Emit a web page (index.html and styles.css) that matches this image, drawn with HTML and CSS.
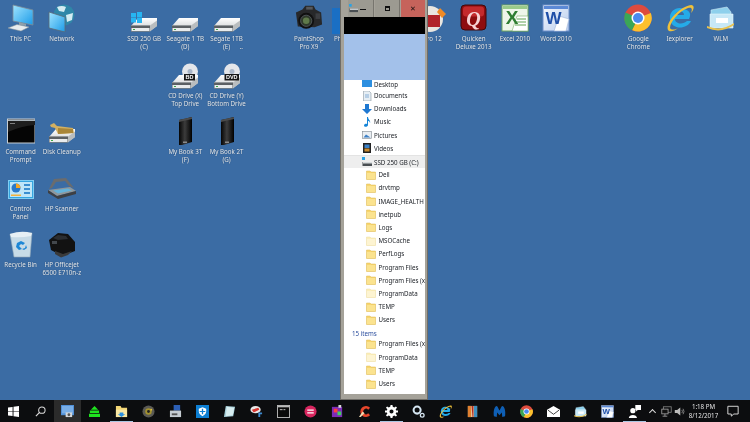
FILE: index.html
```html
<!DOCTYPE html>
<html lang="en">
<head>
<meta charset="utf-8">
<title>Desktop</title>
<link rel="stylesheet" href="styles.css">
</head>
<body>
<svg class="defs" aria-hidden="true">
  <defs>
    <linearGradient id="sky" x1="0" y1="0" x2="1" y2="1"><stop offset="0" stop-color="#9fe4ff"/><stop offset="1" stop-color="#1c9be8"/></linearGradient>
    <linearGradient id="slab" x1="0" y1="0" x2="0" y2="1"><stop offset="0" stop-color="#ffffff"/><stop offset="1" stop-color="#c9ccce"/></linearGradient>
    <linearGradient id="tower" x1="0" y1="0" x2="1" y2="0"><stop offset="0" stop-color="#050505"/><stop offset=".45" stop-color="#3c3c3c"/><stop offset="1" stop-color="#000"/></linearGradient>
    <linearGradient id="wordg" x1="0" y1="0" x2="1" y2="1"><stop offset="0" stop-color="#f4f8fd"/><stop offset="1" stop-color="#b9cdee"/></linearGradient>
    <symbol id="pc" viewBox="0 0 28 28">
      <path d="M6 1 L26 6 V21 L6 17Z" fill="url(#sky)" stroke="#7d8a94" stroke-width=".8"/>
      <path d="M12 18 L19 20 V22 L12 21Z" fill="#8fa0aa"/>
      <path d="M1 24 L10 20.5 L22 23 L14 27Z" fill="#e8ecee" stroke="#8d9499" stroke-width=".5"/>
    </symbol>
    <symbol id="net" viewBox="0 0 28 28">
      <circle cx="16" cy="11" r="10.5" fill="#2f87a8"/>
      <path d="M9 3 Q14 1 18 3 L16 8 L11 7Z M18 11 L25 9 L24 16 L19 18Z" fill="#d4ecf2"/>
      <path d="M1 8 L17 13 V28 L1 24Z" fill="url(#sky)" stroke="#5c6a74" stroke-width=".8"/>
    </symbol>
    <symbol id="drive" viewBox="0 0 28 28">
      <path d="M1 22 L8 14 H27 L27 22 L20 27 H1Z" fill="url(#slab)"/>
      <path d="M1 21.500 H20 L27 16.500 V22 L20 27.500 H1Z" fill="#b9bdbf"/>
      <path d="M1 21.500 H20 V27.500 H1Z" fill="#5b6064"/>
      <path d="M1.500 24 H19.500 V27 H1.500Z" fill="#e9ebec"/>
      <rect x="3" y="25" width="2" height="1" fill="#3da94a"/>
    </symbol>
    <symbol id="ssd" viewBox="0 0 28 28">
      <use href="#drive" width="28" height="28"/>
      <rect x="1" y="9" width="5" height="4.500" fill="#27b5f2"/><rect x="7" y="8" width="5" height="5.500" fill="#27b5f2"/>
      <rect x="1" y="14" width="5" height="4.500" fill="#27b5f2"/><rect x="7" y="14" width="5" height="5" fill="#27b5f2"/>
    </symbol>
    <symbol id="bd" viewBox="0 0 28 28">
      <circle cx="19" cy="10.500" r="8" fill="#e4e6ea"/><circle cx="19" cy="10.500" r="2.500" fill="#a9b6c8"/>
      <use href="#drive" width="28" height="28"/>
      <rect x="13" y="13" width="11" height="6.500" fill="#161616"/>
      <text x="18.500" y="18" class="disc-text">BD</text>
    </symbol>
    <symbol id="dvd" viewBox="0 0 28 28">
      <circle cx="19" cy="10.500" r="8" fill="#e4e6ea"/><circle cx="19" cy="10.500" r="2.500" fill="#a9b6c8"/>
      <use href="#drive" width="28" height="28"/>
      <rect x="11.500" y="13" width="14.500" height="6.500" fill="#161616"/>
      <text x="18.800" y="18" class="disc-text">DVD</text>
    </symbol>
    <symbol id="book" viewBox="0 0 28 28">
      <path d="M8 3 L21 0 V25 L8 29Z" fill="url(#tower)"/>
      <path d="M8 3 L21 0 V2 L8 5Z" fill="#4b4b4b"/>
      <rect x="12" y="24.500" width="4" height="1.500" fill="#8a8a8a"/>
    </symbol>
    <symbol id="cmd" viewBox="0 0 28 28">
      <rect x=".5" y="2" width="27.500" height="24" fill="#050505" stroke="#c7ced3"/>
      <rect x="1" y="2.500" width="27" height="1.500" fill="#aab4bb"/>
      <path d="M1 4 H28 V8 Q14 9 1 15Z" fill="#1e1e1e"/>
      <rect x="3" y="6" width="5" height=".8" fill="#999"/>
    </symbol>
    <symbol id="clean" viewBox="0 0 28 28">
      <use href="#drive" y="-2" width="28" height="28"/>
      <path d="M2 8 L6 6 L9 9 L25 11 L26 16 L10 17 L7 11 L3 10Z" fill="#d3b061"/>
      <path d="M10 11 L25 12 V16 L10 17Z" fill="#a98638"/>
    </symbol>
    <symbol id="cpanel" viewBox="0 0 28 28">
      <rect x="1.500" y="6.500" width="25" height="18" fill="#35a5e0" stroke="#7fcdf2"/>
      <rect x="3" y="8" width="22" height="15" fill="#bfe6f8"/>
      <circle cx="9" cy="14" r="4.500" fill="#2a79c9"/><path d="M9 14 V9.500 A4.500 4.500 0 0 1 13.500 14Z" fill="#f6a623"/>
      <rect x="17" y="10" width="6" height="2" fill="#3b8fd0"/><rect x="17" y="14" width="6" height="2" fill="#3b8fd0"/><rect x="17" y="18" width="6" height="2" fill="#3b8fd0"/>
      <rect x="4" y="20.500" width="10" height="1.500" fill="#f2b23e"/>
    </symbol>
    <symbol id="scan" viewBox="0 0 28 28">
      <path d="M0 16 L22 13 L28 17 L9 22Z" fill="#8f979b"/>
      <path d="M5 16.500 L20 14.500 L24 16.500 L10 19.500Z" fill="#63b3dc"/>
      <path d="M0 16 L9 22 L28 17 V20 L10 25 L0 19Z" fill="#3e4043"/>
      <path d="M1 15 L6 5 L18 4 L26 14 L21 12 L17 7 L8 8 L4 14Z" fill="#6a6c6e"/>
    </symbol>
    <symbol id="bin" viewBox="0 0 28 28">
      <path d="M3 4 L25 3 L23 27 H7Z" fill="#c7dbe7" stroke="#94aab8" stroke-width=".6"/>
      <path d="M3 4 Q14 0 25 3 L24 6 Q14 8 4 7Z" fill="#e7f0f5"/>
      <path d="M14 11 L18 13 L16 15 L14 14 L12 16 L15 19 L12 20 L9 17 L10 13Z M19 15 L20 18 L17 20 L15 19 L18 18Z" fill="#1d87d6"/>
    </symbol>
    <symbol id="printer" viewBox="0 0 28 28">
      <path d="M1 10 L10 3 L20 4 L27 12 V21 L14 26 L3 20Z" fill="#121212"/>
      <path d="M5 8 L10 5 L18 6 L20 9 L10 10Z" fill="#2b2d30"/>
      <path d="M7 21 L15 24 L24 21 L20 25 L13 27.500 L7 24Z" fill="#3a3a3a"/>
      <rect x="4" y="11" width="5" height="3" fill="#43484d"/>
    </symbol>
    <symbol id="camera" viewBox="0 0 30 28">
      <path d="M1 8 L8 5 L11 1 L20 1 L22 5 L28 8 L29 21 L21 24 L3 23Z" fill="#27282a"/>
      <circle cx="12" cy="17" r="8.500" fill="#101010"/><circle cx="12" cy="17" r="6" fill="#2f3a2a" stroke="#50555a"/>
      <circle cx="12" cy="17" r="3.500" fill="#5f7a4a"/>
      <rect x="12" y="2" width="7" height="3" fill="#55585c"/>
      <rect x="22" y="9" width="5" height="6" fill="#3c3e42"/>
    </symbol>
    <symbol id="quicken" viewBox="0 0 28 28">
      <rect x="1" y="1" width="25" height="25" rx="4" fill="#8e0d10" stroke="#40080a"/>
      <rect x="3" y="2.500" width="21" height="10" rx="3" fill="#c32a2d"/>
      <text x="13.500" y="22" class="q-text">Q</text>
    </symbol>
    <symbol id="excel" viewBox="0 0 28 28">
      <rect x="1" y="1" width="26" height="26" fill="#eef6ea" stroke="#6fa65f"/>
      <path d="M2 2 H26 V5 H2Z" fill="#9acb8a"/>
      <path d="M16 12 H27 V27 H11Z" fill="#fff" stroke="#7db06d" stroke-width=".6"/>
      <path d="M16 15 H25 M15 18 H25 M14 21 H25" stroke="#60a352" fill="none"/>
      <text x="11" y="20" class="x-text">X</text>
    </symbol>
    <symbol id="word" viewBox="0 0 28 28">
      <rect x="1" y="1" width="26" height="26" fill="url(#wordg)" stroke="#6d8ec9"/>
      <path d="M2 2 H26 V5 H2Z" fill="#5b89d6"/>
      <path d="M17 12 L27 15 L24 27 L12 27Z" fill="#fff" stroke="#9db4d8" stroke-width=".6"/>
      <text x="11.500" y="20" class="w-text">W</text>
    </symbol>
    <symbol id="chrome" viewBox="0 0 28 28">
      <circle cx="14" cy="14" r="13.500" fill="#dd4b3e"/>
      <path d="M14 14 L26.800 9 A13.500 13.500 0 0 1 8 26 Z" fill="#fbc02d"/>
      <path d="M14 14 L8 26.200 A13.500 13.500 0 0 1 1.500 8.500 Z" fill="#3aa757"/>
      <circle cx="14" cy="14" r="6.500" fill="#fff"/><circle cx="14" cy="14" r="5" fill="#4a8bf0"/>
    </symbol>
    <symbol id="ie" viewBox="0 0 28 28">
      <path d="M23 15 H9 C9 20 17 21 21 17 H25 C21 26 5 26 4 15 C3 6 12 2 18 5 C25 7 25 11 23 15Z M9 11 H18 C18 6 10 6 9 11Z" fill="#25abe8" fill-rule="evenodd"/>
      <path d="M2 26 C-1 20 12 3 25 1 C29 1 28 6 25 9 C27 4 25 3 22 4 C13 7 4 18 4 24 C5 26 9 26 12 24 C8 28 3 28 2 26Z" fill="#efc13a"/>
    </symbol>
    <symbol id="wlm" viewBox="0 0 28 28">
      <path d="M4 6 L20 3 L24 8 V22 L4 22Z" fill="#8ed0ec" stroke="#cfeaf5" stroke-width=".6"/>
      <path d="M3 10 H26 V24 H3Z" fill="#c7e8f7" stroke="#e8f6fc" stroke-width=".6"/>
      <rect x="9" y="14" width="12" height="5" fill="#fff"/>
      <path d="M0 22 Q14 28 27 19 L27 21 Q14 30 0 24Z" fill="#e9c24e"/>
    </symbol>
    <symbol id="win" viewBox="0 0 12 12"><path d="M0 1.600 L5 1 V5.600 H0Z M6 .8 L12 0 V5.600 H6Z M0 6.400 H5 V11 L0 10.400Z M6 6.400 H12 V12 L6 11.200Z" fill="#fff"/></symbol>
    <symbol id="search" viewBox="0 0 12 12"><circle cx="7.500" cy="4.500" r="3.500" fill="none" stroke="#ddd" stroke-width="1.100"/><path d="M5 7 L1 11" stroke="#ddd" stroke-width="1.300"/></symbol>
    <symbol id="screen" viewBox="0 0 14 14"><rect x="0" y="0" width="14" height="11" fill="#4f8fd6"/><rect x="1" y="1" width="12" height="8" fill="#79aee6"/><path d="M5 8 H12 V13 H5Z" fill="#d5d8db"/><circle cx="8.500" cy="10.500" r="1.500" fill="#555"/></symbol>
    <symbol id="green" viewBox="0 0 12 12"><path d="M6 0 L10 4 H2Z M1 5 H11 V7.500 H1Z M0 8.500 H12 V12 H0Z" fill="#1fe41f"/></symbol>
    <symbol id="folderbar" viewBox="0 0 14 14"><path d="M1 1 H6 L7 3 H13 V13 H1Z" fill="#f3d675"/><rect x="1" y="5" width="12" height="8" fill="#fbe8a3"/><path d="M5 8 H9 V10 H11 L7 13 L3 10 H5Z" fill="#2b8fe0"/></symbol>
    <symbol id="disc" viewBox="0 0 14 14"><circle cx="7" cy="7" r="6.500" fill="#5b5a55"/><circle cx="7" cy="7" r="3.500" fill="#a3912f"/><circle cx="7" cy="7" r="1.500" fill="#222"/><circle cx="10" cy="5" r="1" fill="#e0c33a"/></symbol>
    <symbol id="tbprint" viewBox="0 0 14 14"><path d="M5 0 H12 V6 H5Z" fill="#2c5fb5"/><path d="M1 6 H13 V13 H1Z" fill="#c7cdd3"/><rect x="3" y="9" width="6" height="2" fill="#555"/></symbol>
    <symbol id="shield" viewBox="0 0 14 14"><rect width="14" height="14" fill="#0d7fd4"/><path d="M7 2.500 L11 4 V7 C11 9.500 9 11 7 12 C5 11 3 9.500 3 7 V4Z M6.300 4 V6.500 H4 V7.500 H6.300 V10 H7.700 V7.500 H10 V6.500 H7.700 V4Z" fill="#fff" fill-rule="evenodd"/></symbol>
    <symbol id="note" viewBox="0 0 14 14"><path d="M3 1 L13 2 L11 12 L1 13Z" fill="#a7cfd9"/><path d="M4 2 L12 3 L10.500 11 L3 12Z" fill="#d7edf0"/></symbol>
    <symbol id="tool" viewBox="0 0 14 14"><ellipse cx="6" cy="5" rx="5.500" ry="4" fill="#e8e8e8"/><path d="M2 5 L9 3 L10 5 L4 8Z" fill="#d8352e"/><path d="M9 8 H13 V10 H11 V13 H9Z" fill="#3c8ad0"/></symbol>
    <symbol id="tcmd" viewBox="0 0 14 14"><rect x=".5" y=".5" width="13" height="13" fill="#0a0a0a" stroke="#bbb"/><rect x="1" y="1" width="12" height="1.500" fill="#bbb"/><path d="M3 5 H6 M7 5 H9" stroke="#ccc"/></symbol>
    <symbol id="pink" viewBox="0 0 14 14"><circle cx="7" cy="7" r="6.500" fill="#d8265f"/><path d="M3.500 5.500 H10.500 M3.500 8.500 H10.500" stroke="#fff" stroke-width="1.200"/></symbol>
    <symbol id="paint" viewBox="0 0 14 14"><rect x="1" y="2" width="11" height="11" fill="#7c2bb8"/><rect x="3" y="4" width="4" height="4" fill="#ff3d3d"/><rect x="7" y="7" width="4" height="4" fill="#3fd35a"/><rect x="8" y="0" width="3" height="3" fill="#d9d9d9"/></symbol>
    <symbol id="ccl" viewBox="0 0 14 14"><path d="M13 3 A6 6 0 1 0 13 11 L11 9 A3 3 0 1 1 11 5Z" fill="#e8462b"/><path d="M1 13 L5 7 L7 9 L3 13Z" fill="#f0d9b0"/></symbol>
    <symbol id="gear" viewBox="0 0 14 14"><path d="M6 0 H8 L8.400 2 L10 2.700 L11.700 1.500 L13 3 L11.500 4.500 L12 6 H14 V8 H12 L11.500 9.500 L13 11 L11.700 12.500 L10 11.300 L8.400 12 L8 14 H6 L5.600 12 L4 11.300 L2.300 12.500 L1 11 L2.500 9.500 L2 8 H0 V6 H2 L2.500 4.500 L1 3 L2.300 1.500 L4 2.700 L5.600 2Z M7 4.800 A2.200 2.200 0 1 0 7 9.200 A2.200 2.200 0 1 0 7 4.800Z" fill="#fff" fill-rule="evenodd"/></symbol>
    <symbol id="gears" viewBox="0 0 14 14"><circle cx="5.500" cy="5.500" r="3.800" fill="none" stroke="#d6e6f2" stroke-width="2.200"/><circle cx="11" cy="11" r="2" fill="none" stroke="#d6e6f2" stroke-width="1.400"/></symbol>
    <symbol id="relay" viewBox="0 0 14 14"><rect x="2" y="1" width="10" height="12" fill="#e8c9a0"/><rect x="2" y="1" width="3.500" height="12" fill="#e08030"/><rect x="8.500" y="1" width="3.500" height="12" fill="#3f8fc0"/><path d="M6 1 L8 1 L8 13 L7 13Z" fill="#b02a20"/></symbol>
    <symbol id="mbam" viewBox="0 0 14 14"><path d="M1 12 C0 6 2 1 4 1 C5 1 6 4 7 6 C8 4 9 1 10 1 C12 1 14 6 13 12 L10 13 L9.500 8 L7 11 L4.500 8 L4 13Z" fill="#0f5fb5"/></symbol>
    <symbol id="mail" viewBox="0 0 14 14"><path d="M0 5 L7 1 L14 5 V13 H0Z" fill="#fff"/><path d="M1 5.500 L7 10 L13 5.500" stroke="#222" fill="none" stroke-width=".9"/></symbol>
    <symbol id="person" viewBox="0 0 16 16"><circle cx="6" cy="7" r="3.200" fill="#fff"/><path d="M1 16 C1 11 11 11 11 16Z" fill="#fff"/><path d="M9 0 H16 V6 H12 L10 8 V6 H9Z" fill="#fff"/></symbol>
    <symbol id="tnet" viewBox="0 0 14 14"><rect x="3" y="1" width="10" height="7" fill="none" stroke="#888"/><rect x="1" y="4" width="8" height="6" fill="#111" stroke="#aaa"/><path d="M5 10 V13 M2 13 H8" stroke="#aaa"/></symbol>
    <symbol id="sound" viewBox="0 0 14 14"><path d="M1 5 H4 L8 2 V12 L4 9 H1Z" fill="#bbb"/><path d="M10 5 Q11.500 7 10 9 M11.500 3.500 Q14 7 11.500 10.500" stroke="#999" fill="none"/></symbol>
    <symbol id="action" viewBox="0 0 14 14"><path d="M1 1.500 H13 V10.500 H8 L5 13 V10.500 H1Z" fill="none" stroke="#ddd" stroke-width="1.100"/></symbol>
    <symbol id="f" viewBox="0 0 10 10"><path d="M.5 1 H4 L5 2 H9.500 V9.500 H.5Z" fill="#f7d56e" stroke="#dcb851" stroke-width=".5"/><rect x="1" y="3" width="8" height="6" fill="#fbe38f"/></symbol>
    <symbol id="fpale" viewBox="0 0 10 10"><path d="M.5 1 H4 L5 2 H9.500 V9.500 H.5Z" fill="#fbeeb9" stroke="#ecdca0" stroke-width=".5"/><rect x="1" y="3" width="8" height="6" fill="#fdf4d2"/></symbol>
    <symbol id="ndesk" viewBox="0 0 10 10"><rect y="1" width="10" height="7" fill="#2d8fe0"/></symbol>
    <symbol id="ndocs" viewBox="0 0 10 10"><path d="M1.500 0 H7 L9 2 V10 H1.500Z" fill="#e6eef4" stroke="#8b98a3" stroke-width=".6"/><path d="M3 4 H7 M3 6 H7" stroke="#5b93c9" stroke-width=".7"/></symbol>
    <symbol id="ndown" viewBox="0 0 10 10"><path d="M3 0 H7 V5 H10 L5 10 L0 5 H3Z" fill="#1f78d1"/></symbol>
    <symbol id="nmusic" viewBox="0 0 10 10"><path d="M5 0 H6 C6 3 9 3 8 6 C7.500 4 6.500 4 6 4 V8 C6 10 2 10.500 2 8.500 C2 7 4 6.500 5 7Z" fill="#1585d8"/></symbol>
    <symbol id="npics" viewBox="0 0 10 10"><rect x=".5" y="1.500" width="9" height="7" fill="#e9eef2" stroke="#7d8890" stroke-width=".6"/><path d="M1.500 7.500 L4 4.500 L8.500 7.500Z" fill="#3c7fc4"/></symbol>
    <symbol id="nvids" viewBox="0 0 10 10"><rect x="1" y="0" width="8" height="10" fill="#222"/><rect x="2.500" y="1.500" width="5" height="3.500" fill="#3c82c8"/><rect x="2.500" y="5.500" width="5" height="3" fill="#c98a2e"/></symbol>
    <symbol id="nssd" viewBox="0 0 10 10"><rect x="0" y="0" width="3" height="3" fill="#2aa3e6"/><rect x=".5" y="5" width="9.500" height="4" fill="#4a4f53"/><rect x="1" y="5" width="9" height="1.500" fill="#d7dbdd"/></symbol>
  </defs>
</svg>

<main class="desktop">
  <div class="icon-grid">
    <figure class="item c1 r1"><svg class="ic"><use href="#pc"/></svg><figcaption>This PC</figcaption></figure>
    <figure class="item c2 r1"><svg class="ic"><use href="#net"/></svg><figcaption>Network</figcaption></figure>
    <figure class="item c4 r1"><svg class="ic"><use href="#ssd"/></svg><figcaption>SSD 250 GB<br>(C)</figcaption></figure>
    <figure class="item c5 r1"><svg class="ic"><use href="#drive"/></svg><figcaption>Seagate 1 TB<br>(D)</figcaption></figure>
    <figure class="item c6 r1"><svg class="ic"><use href="#drive"/></svg><figcaption>Segate 1TB<br>(E)<span class="dots">..</span></figcaption></figure>
    <figure class="item c8 r1"><svg class="ic"><use href="#camera"/></svg><figcaption>PaintShop<br>Pro X9</figcaption></figure>
    <figure class="item c9 r1"><svg class="ic"><rect x="-4" y="4" width="28" height="26" fill="#1a6fc4"/></svg><figcaption>PhotoShop</figcaption></figure>
    <figure class="item c11 r1"><svg class="ic"><circle cx="12" cy="15" r="13" fill="#e9e6e0"/><rect x="8" y="11" width="14" height="12" fill="#b1242a"/><path d="M22 4 L28 10 L24 14 L19 8Z" fill="#ef8a25"/></svg><figcaption>Pro 12</figcaption></figure>
    <figure class="item c12 r1"><svg class="ic"><use href="#quicken"/></svg><figcaption>Quicken<br>Deluxe 2013</figcaption></figure>
    <figure class="item c13 r1"><svg class="ic"><use href="#excel"/></svg><figcaption>Excel 2010</figcaption></figure>
    <figure class="item c14 r1"><svg class="ic"><use href="#word"/></svg><figcaption>Word 2010</figcaption></figure>
    <figure class="item c16 r1"><svg class="ic"><use href="#chrome"/></svg><figcaption>Google<br>Chrome</figcaption></figure>
    <figure class="item c17 r1"><svg class="ic"><use href="#ie"/></svg><figcaption>Iexplorer</figcaption></figure>
    <figure class="item c18 r1"><svg class="ic"><use href="#wlm"/></svg><figcaption>WLM</figcaption></figure>

    <figure class="item c5 r2"><svg class="ic"><use href="#bd"/></svg><figcaption>CD Drive (X)<br>Top Drive</figcaption></figure>
    <figure class="item c6 r2"><svg class="ic"><use href="#dvd"/></svg><figcaption>CD Drive (Y)<br>Bottom Drive</figcaption></figure>

    <figure class="item c1 r3"><svg class="ic"><use href="#cmd"/></svg><figcaption>Command<br>Prompt</figcaption></figure>
    <figure class="item c2 r3"><svg class="ic"><use href="#clean"/></svg><figcaption>Disk Cleanup</figcaption></figure>
    <figure class="item c5 r3"><svg class="ic"><use href="#book"/></svg><figcaption>My Book 3T<br>(F)</figcaption></figure>
    <figure class="item c6 r3"><svg class="ic"><use href="#book"/></svg><figcaption>My Book 2T<br>(G)</figcaption></figure>

    <figure class="item c1 r4"><svg class="ic"><use href="#cpanel"/></svg><figcaption>Control<br>Panel</figcaption></figure>
    <figure class="item c2 r4"><svg class="ic"><use href="#scan"/></svg><figcaption>HP Scanner</figcaption></figure>

    <figure class="item c1 r5"><svg class="ic"><use href="#bin"/></svg><figcaption>Recycle Bin</figcaption></figure>
    <figure class="item c2 r5"><svg class="ic"><use href="#printer"/></svg><figcaption>HP Officejet<br>6500 E710n-z</figcaption></figure>
  </div>

  <section class="window">
    <div class="titlebar">
      <div class="tbtn tmin"><svg class="mini"><use href="#nssd"/></svg><span class="dash"></span></div>
      <div class="tbtn"><span class="box"></span></div>
      <div class="tbtn tclose"><span class="cross">✕</span></div>
    </div>
    <div class="band-black"></div>
    <div class="band-blue"></div>
    <div class="list">
      <div class="row nav clip-top"><svg class="ri"><use href="#ndesk"/></svg>Desktop</div>
      <div class="row nav"><svg class="ri"><use href="#ndocs"/></svg>Documents</div>
      <div class="row nav"><svg class="ri"><use href="#ndown"/></svg>Downloads</div>
      <div class="row nav"><svg class="ri"><use href="#nmusic"/></svg>Music</div>
      <div class="row nav"><svg class="ri"><use href="#npics"/></svg>Pictures</div>
      <div class="row nav"><svg class="ri"><use href="#nvids"/></svg>Videos</div>
      <div class="row nav sel"><svg class="ri"><use href="#nssd"/></svg>SSD 250 GB (C:)</div>
      <div class="row"><svg class="ri"><use href="#f"/></svg>Dell</div>
      <div class="row"><svg class="ri"><use href="#f"/></svg>drvtmp</div>
      <div class="row"><svg class="ri"><use href="#f"/></svg>IMAGE_HEALTH</div>
      <div class="row"><svg class="ri"><use href="#f"/></svg>inetpub</div>
      <div class="row"><svg class="ri"><use href="#f"/></svg>Logs</div>
      <div class="row"><svg class="ri"><use href="#fpale"/></svg>MSOCache</div>
      <div class="row"><svg class="ri"><use href="#f"/></svg>PerfLogs</div>
      <div class="row"><svg class="ri"><use href="#f"/></svg>Program Files</div>
      <div class="row"><svg class="ri"><use href="#f"/></svg>Program Files (x</div>
      <div class="row"><svg class="ri"><use href="#fpale"/></svg>ProgramData</div>
      <div class="row"><svg class="ri"><use href="#f"/></svg>TEMP</div>
      <div class="row"><svg class="ri"><use href="#f"/></svg>Users</div>
      <div class="count">15 items</div>
      <div class="row"><svg class="ri"><use href="#f"/></svg>Program Files (x</div>
      <div class="row"><svg class="ri"><use href="#fpale"/></svg>ProgramData</div>
      <div class="row"><svg class="ri"><use href="#f"/></svg>TEMP</div>
      <div class="row"><svg class="ri"><use href="#f"/></svg>Users</div>
    </div>
  </section>
</main>

<footer class="taskbar">
  <div class="tb"><svg class="ti small"><use href="#win"/></svg></div>
  <div class="tb"><svg class="ti small"><use href="#search"/></svg></div>
  <div class="tb active"><svg class="ti"><use href="#screen"/></svg></div>
  <div class="tb"><svg class="ti small"><use href="#green"/></svg></div>
  <div class="tb run"><svg class="ti"><use href="#folderbar"/></svg></div>
  <div class="tb"><svg class="ti"><use href="#disc"/></svg></div>
  <div class="tb"><svg class="ti"><use href="#tbprint"/></svg></div>
  <div class="tb"><svg class="ti"><use href="#shield"/></svg></div>
  <div class="tb"><svg class="ti"><use href="#note"/></svg></div>
  <div class="tb"><svg class="ti"><use href="#tool"/></svg></div>
  <div class="tb"><svg class="ti"><use href="#tcmd"/></svg></div>
  <div class="tb"><svg class="ti"><use href="#pink"/></svg></div>
  <div class="tb"><svg class="ti"><use href="#paint"/></svg></div>
  <div class="tb"><svg class="ti"><use href="#ccl"/></svg></div>
  <div class="tb run"><svg class="ti"><use href="#gear"/></svg></div>
  <div class="tb"><svg class="ti"><use href="#gears"/></svg></div>
  <div class="tb"><svg class="ti"><use href="#ie"/></svg></div>
  <div class="tb"><svg class="ti"><use href="#relay"/></svg></div>
  <div class="tb"><svg class="ti"><use href="#mbam"/></svg></div>
  <div class="tb"><svg class="ti"><use href="#chrome"/></svg></div>
  <div class="tb"><svg class="ti"><use href="#mail"/></svg></div>
  <div class="tb"><svg class="ti"><use href="#wlm"/></svg></div>
  <div class="tb"><svg class="ti"><use href="#word"/></svg></div>
  <div class="tb run"><svg class="ti"><use href="#person"/></svg></div>
  <div class="tray">
    <span class="chev"></span>
    <svg class="tr"><use href="#tnet"/></svg>
    <svg class="tr"><use href="#sound"/></svg>
    <time class="clock">1:18 PM<br>8/12/2017</time>
    <svg class="tr act"><use href="#action"/></svg>
  </div>
</footer>
</body>
</html>
```

FILE: styles.css
```css
* { box-sizing: border-box; }
html, body { margin: 0; padding: 0; width: 750px; height: 422px; overflow: hidden; background: #3a6ca3; font-family: "Noto Sans", "Open Sans", sans-serif; }
body { display: flex; flex-direction: column; }
.defs { position: absolute; width: 0; height: 0; }

.desktop { position: relative; height: 400px; flex: none; background: #3b6ca4; overflow: hidden; filter: blur(.3px); }
.icon-grid { display: grid; grid-template-columns: repeat(18, 41.2px); grid-template-rows: repeat(5, 56.5px); padding-top: 4px; }
.item { margin: 0; display: flex; flex-direction: column; align-items: center; min-width: 0; }
.ic { width: 28px; height: 28px; flex: none; overflow: visible; }
figcaption { position: relative; margin-top: 3px; width: 60px; margin-left: -10px; margin-right: -10px; text-align: center; font-size: 6.200px; line-height: 8.300px; color: #e6edf5; text-shadow: 0 0 1px rgba(0,0,0,.5); white-space: nowrap; }
.dots { position: absolute; left: 43px; top: 8px; }

.c1 { grid-column: 1; } .c2 { grid-column: 2; } .c4 { grid-column: 4; } .c5 { grid-column: 5; } .c6 { grid-column: 6; }
.c8 { grid-column: 8; } .c9 { grid-column: 9; } .c11 { grid-column: 11; } .c12 { grid-column: 12; } .c13 { grid-column: 13; }
.c14 { grid-column: 14; } .c16 { grid-column: 16; } .c17 { grid-column: 17; } .c18 { grid-column: 18; }
.r1 { grid-row: 1; } .r2 { grid-row: 2; } .r3 { grid-row: 3; } .r4 { grid-row: 4; } .r5 { grid-row: 5; }

.disc-text { font: 700 5.500px "Liberation Sans", sans-serif; fill: #fff; text-anchor: middle; }
.q-text { font: italic 700 20px "Liberation Serif", serif; fill: #f7d4d6; text-anchor: middle; }
.x-text { font: 700 19px "Liberation Sans", sans-serif; fill: #2e7d32; text-anchor: middle; }
.w-text { font: 700 17px "Liberation Sans", sans-serif; fill: #1f4fa8; text-anchor: middle; }

.window { position: absolute; left: 340px; top: 0; width: 88px; height: 400px; background: #a5a299; border: 1px solid #6f6d67; border-top: 0; padding: 0 2px 5px 3px; display: flex; flex-direction: column; }
.titlebar { height: 17px; flex: none; display: flex; margin: 0 0 0 4px; gap: 1px; }
.tbtn { flex: 1; background: #9c9a91; border-right: 1px solid #77756e; display: flex; align-items: center; justify-content: center; position: relative; }
.tmin { gap: 2px; justify-content: flex-start; padding-left: 1px; }
.mini { width: 9px; height: 9px; flex: none; }
.dash { width: 6px; height: 1.500px; background: #111; margin-top: 2px; }
.box { width: 5px; height: 5px; border: 1px solid #111; border-top-width: 2px; }
.tclose { background: #c6635b; border-right: 0; }
.cross { font: 700 7px "DejaVu Sans", sans-serif; color: #1a1010; }
.band-black { height: 17px; flex: none; background: #000; }
.band-blue { height: 46px; flex: none; background: #a3c1ea; }
.list { flex: 1; min-height: 0; background: #fff; overflow: hidden; color: #20242a; font-size: 6.200px; }
.row { height: 13.200px; display: flex; align-items: center; gap: 2.500px; padding-left: 22px; white-space: nowrap; }
.nav { padding-left: 17.500px; }
.clip-top { height: 9px; align-items: flex-end; line-height: 8px; overflow: hidden; }
.ri { width: 10px; height: 10px; flex: none; }
.sel { background: #eeeeee; border-top: 1px solid #e3e3e3; }
.count { height: 11px; padding-left: 8px; color: #2c4f9e; font-size: 6.200px; line-height: 16px; }

.taskbar { height: 22px; flex: none; display: flex; background: #0c0d0f; filter: blur(.25px); }
.tb { width: 27px; height: 22px; flex: none; display: flex; align-items: center; justify-content: center; position: relative; }
.active { background: #2b2b2b; }
.run::after { content: ""; position: absolute; left: 2px; right: 2px; bottom: 0; height: 1.500px; background: #a9c6e2; }
.ti { width: 13px; height: 13px; }
.small { width: 11px; height: 11px; }
.tray { flex: 1; display: flex; align-items: center; }
.chev { width: 5px; height: 5px; border-left: 1px solid #ddd; border-top: 1px solid #ddd; transform: rotate(45deg); margin: 3px 6px 0 1.500px; flex: none; }
.tr { width: 11px; height: 11px; flex: none; margin-right: 2px; }
.clock { width: 34px; flex: none; text-align: center; color: #e4e4e4; font-size: 6.200px; line-height: 9px; }
.act { margin-left: 6px; width: 12px; height: 12px; }
```
